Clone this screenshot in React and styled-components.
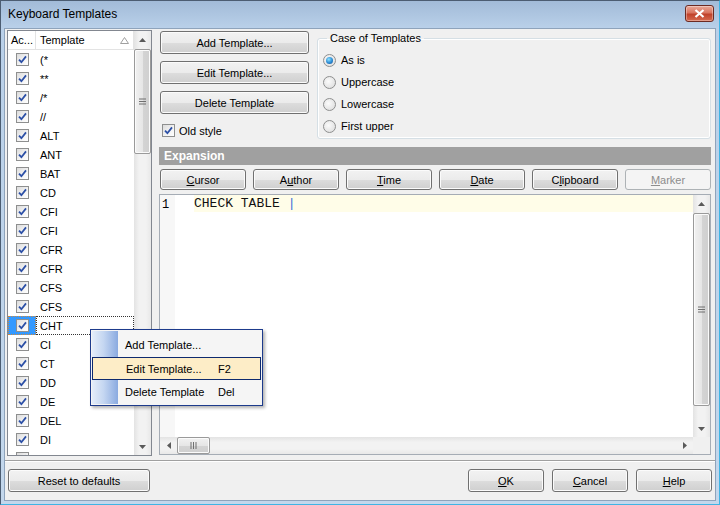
import React from "react";
import styled, { createGlobalStyle, css } from "styled-components";

const GlobalStyle = createGlobalStyle`
  html, body {
    margin: 0;
    padding: 0;
    background: #ffffff;
  }
  body {
    font-family: "Liberation Sans", Arial, sans-serif;
    font-size: 11px;
    color: #000;
  }
  * {
    box-sizing: border-box;
  }
`;

// last row only peeks in at the bottom edge, its name is hidden
const templates = [
  "(*", "**", "/*", "//", "ALT", "ANT", "BAT", "CD", "CFI", "CFI", "CFR",
  "CFR", "CFS", "CFS", "CHT", "CI", "CT", "DD", "DE", "DEL", "DI", ""
];

const cases = ["As is", "Uppercase", "Lowercase", "First upper"];

const macros = [
  { pre: "", key: "C", post: "ursor" },
  { pre: "A", key: "u", post: "thor" },
  { pre: "", key: "T", post: "ime" },
  { pre: "", key: "D", post: "ate" },
  { pre: "C", key: "l", post: "ipboard" },
  { pre: "", key: "M", post: "arker", disabled: true }
];

function Arrow({ dir }) {
  const pts = {
    up: "0,4 3.5,0 7,4",
    down: "0,0 3.5,4 7,0",
    left: "4,0 0,3.5 4,7",
    right: "0,0 4,3.5 0,7"
  }[dir];
  const vertical = dir === "up" || dir === "down";
  return (
    <svg width={vertical ? 7 : 4} height={vertical ? 4 : 7}>
      <polygon points={pts} fill="#5a5a5a" />
    </svg>
  );
}

function Grip({ horizontal }) {
  return horizontal ? (
    <svg width="8" height="7">
      <path d="M1 0v7M3.5 0v7M6 0v7" stroke="#6f6f6f" strokeWidth="1" />
    </svg>
  ) : (
    <svg width="7" height="8">
      <path d="M0 1h7M0 3.5h7M0 6h7" stroke="#6f6f6f" strokeWidth="1" />
    </svg>
  );
}

function Check({ checked = true }) {
  return (
    <CheckBox>
      {checked && (
        <svg width="11" height="11" viewBox="0 0 11 11">
          <path d="M2 5.6 L4.4 8.2 L9 2.4" fill="none" stroke="#2b4fa6" strokeWidth="1.8" />
        </svg>
      )}
    </CheckBox>
  );
}

export default function App() {
  return (
    <>
      <GlobalStyle />
      <Window>
        <TitleBar>
          <Title>Keyboard Templates</Title>
          <CloseButton>
            <svg width="11" height="9" viewBox="0 0 11 9">
              <path d="M1.5 1 L9.5 8 M9.5 1 L1.5 8" stroke="#ffffff" strokeWidth="2.2" />
            </svg>
          </CloseButton>
        </TitleBar>

        <Body>
          <Main>
            <ListPanel>
              <ListInner>
                <ListHeader>
                  <HeadCell $w="28px">Ac...</HeadCell>
                  <HeadCell $grow>
                    Template
                    <SortMark>
                      <svg width="9" height="7">
                        <polygon points="0.5,6.5 4.5,0.5 8.5,6.5" fill="none" stroke="#a0a0a0" />
                      </svg>
                    </SortMark>
                  </HeadCell>
                </ListHeader>
                {templates.map((t, i) => (
                  <Row key={i}>
                    <CheckCell $active={t === "CHT"}>
                      <Check />
                    </CheckCell>
                    <NameCell $focus={t === "CHT"}>{t}</NameCell>
                  </Row>
                ))}
              </ListInner>
              <VScroll>
                <ArrowBox>
                  <Arrow dir="up" />
                </ArrowBox>
                <ThumbV $top="1px" $h="105px">
                  <Grip />
                </ThumbV>
                <Spacer />
                <ArrowBox>
                  <Arrow dir="down" />
                </ArrowBox>
              </VScroll>
            </ListPanel>

            <RightPane>
              <TopArea>
                <ButtonCol>
                  <Button $h="23px">Add Template...</Button>
                  <Button $h="23px">Edit Template...</Button>
                  <Button $h="23px">Delete Template</Button>
                  <CheckRow>
                    <Check />
                    <span>Old style</span>
                  </CheckRow>
                </ButtonCol>
                <GroupBox>
                  <Legend>Case of Templates</Legend>
                  {cases.map((c, i) => (
                    <RadioRow key={c}>
                      <Radio $on={i === 0} />
                      <span>{c}</span>
                    </RadioRow>
                  ))}
                </GroupBox>
              </TopArea>

              <SectionBar>Expansion</SectionBar>

              <MacroRow>
                {macros.map((m) => (
                  <Button key={m.post} $w="86px" $h="21px" disabled={m.disabled}>
                    {m.pre}
                    <u>{m.key}</u>
                    {m.post}
                  </Button>
                ))}
              </MacroRow>

              <Editor>
                <EditArea>
                  <Gutter>1</Gutter>
                  <Lines>
                    <CurrentLine>
                      CHECK TABLE <Caret>|</Caret>
                    </CurrentLine>
                  </Lines>
                </EditArea>
                <VScroll $editor>
                  <ArrowBox>
                    <Arrow dir="up" />
                  </ArrowBox>
                  <ThumbV $top="1px" $h="193px">
                    <Grip />
                  </ThumbV>
                  <Spacer />
                  <ArrowBox>
                    <Arrow dir="down" />
                  </ArrowBox>
                </VScroll>
                <HScroll>
                  <ArrowBox>
                    <Arrow dir="left" />
                  </ArrowBox>
                  <ThumbH>
                    <Grip horizontal />
                  </ThumbH>
                  <Spacer />
                  <ArrowBox>
                    <Arrow dir="right" />
                  </ArrowBox>
                </HScroll>
                <Corner />
              </Editor>
            </RightPane>
          </Main>

          <Separator />

          <Footer>
            <Button $w="142px" $h="23px">Reset to defaults</Button>
            <FooterRight>
              <Button $w="76px" $h="23px">
                <u>O</u>K
              </Button>
              <Button $w="76px" $h="23px">
                <u>C</u>ancel
              </Button>
              <Button $w="76px" $h="23px">
                <u>H</u>elp
              </Button>
            </FooterRight>
          </Footer>
        </Body>

        <Menu>
          <MenuStrip />
          <MenuItems>
            <MenuItem>
              <span>Add Template...</span>
            </MenuItem>
            <MenuItem $hot>
              <span>Edit Template...</span>
              <Shortcut>F2</Shortcut>
            </MenuItem>
            <MenuItem>
              <span>Delete Template</span>
              <Shortcut>Del</Shortcut>
            </MenuItem>
          </MenuItems>
        </Menu>
      </Window>
    </>
  );
}

const Window = styled.div`
  position: relative;
  width: 720px;
  height: 505px;
  display: flex;
  flex-direction: column;
  border: 1px solid #4c5d72;
  border-right-color: #3fb4e4;
  border-bottom-color: #3fb4e4;
  background: linear-gradient(#a2bbd8 0px, #b9d0e9 27px, #c3d7ec 100%);
`;

const TitleBar = styled.div`
  height: 27px;
  display: flex;
  justify-content: space-between;
  align-items: flex-start;
  padding: 0 5px 0 7px;
`;

const Title = styled.div`
  font-size: 12px;
  line-height: 14px;
  margin-top: 6px;
  color: #000;
`;

const CloseButton = styled.div`
  width: 29px;
  height: 17px;
  margin-top: 4px;
  border: 1px solid #6c2a22;
  border-radius: 3px;
  display: flex;
  align-items: center;
  justify-content: center;
  background: linear-gradient(#e9a999 0%, #d9745f 45%, #c0412a 55%, #d66a4f 100%);
  box-shadow: inset 0 0 0 1px rgba(255, 255, 255, 0.35);
`;

const Body = styled.div`
  flex: 1;
  margin: 0 3px 3px 3px;
  background: #f0f0f0;
  border: 1px solid #8ea3bb;
  display: flex;
  flex-direction: column;
`;

const Main = styled.div`
  display: flex;
  gap: 7px;
  padding: 1px 4px 0 2px;
  height: 427px;
`;

const ListPanel = styled.div`
  width: 145px;
  height: 426px;
  border: 1px solid #828790;
  background: #fff;
  display: flex;
  overflow: hidden;
`;

const ListInner = styled.div`
  flex: 1;
  overflow: hidden;
`;

const ListHeader = styled.div`
  display: flex;
  height: 19px;
  border-bottom: 1px solid #e3e3e3;
`;

const HeadCell = styled.div`
  position: relative;
  display: flex;
  align-items: center;
  padding-left: ${(p) => (p.$grow ? "4px" : "3px")};
  ${(p) => (p.$grow ? "flex: 1;" : `width: ${p.$w};`)}
  border-right: 1px solid #e3e3e3;
  font-size: 11px;
`;

const SortMark = styled.span`
  position: absolute;
  right: 4px;
  top: 6px;
  display: flex;
`;

const Row = styled.div`
  display: flex;
  height: 19px;
`;

const CheckCell = styled.div`
  width: 28px;
  display: flex;
  align-items: center;
  justify-content: center;
  ${(p) =>
    p.$active &&
    css`
      background: #3399ff;
      outline: 1px dotted #d08a3c;
      outline-offset: -1px;
    `}
`;

const NameCell = styled.div`
  flex: 1;
  display: flex;
  align-items: center;
  padding-left: 4px;
  ${(p) =>
    p.$focus &&
    css`
      outline: 1px dotted #333;
      outline-offset: -1px;
    `}
`;

const CheckBox = styled.span`
  width: 13px;
  height: 13px;
  border: 1px solid #8e8f8f;
  background: linear-gradient(135deg, #dcdcdc 0%, #f4f4f4 60%, #ffffff 100%);
  display: inline-flex;
  align-items: center;
  justify-content: center;
  flex: none;
`;

const VScroll = styled.div`
  width: 17px;
  display: flex;
  flex-direction: column;
  background: linear-gradient(to right, #e3e3e3, #f2f2f2 30%, #f2f2f2 70%, #e8e8e8);
  ${(p) =>
    p.$editor &&
    css`
      grid-row: 1;
      grid-column: 2;
    `}
`;

const HScroll = styled.div`
  grid-row: 2;
  grid-column: 1;
  height: 17px;
  display: flex;
  background: linear-gradient(#e3e3e3, #f2f2f2 30%, #f2f2f2 70%, #e8e8e8);
`;

const Corner = styled.div`
  grid-row: 2;
  grid-column: 2;
  background: #f0f0f0;
`;

const ArrowBox = styled.div`
  width: 17px;
  height: 17px;
  flex: none;
  display: flex;
  align-items: center;
  justify-content: center;
`;

const ThumbV = styled.div`
  margin: ${(p) => p.$top} 0 0 0;
  height: ${(p) => p.$h};
  width: 17px;
  border: 1px solid #9a9a9a;
  border-radius: 2px;
  background: linear-gradient(to right, #f1f1f1, #e6e6e6 50%, #d4d4d4 51%, #cfcfcf);
  box-shadow: inset 0 0 0 1px #fbfbfb;
  display: flex;
  align-items: center;
  justify-content: center;
`;

const ThumbH = styled.div`
  width: 33px;
  height: 17px;
  border: 1px solid #9a9a9a;
  border-radius: 2px;
  background: linear-gradient(#f1f1f1, #e6e6e6 50%, #d4d4d4 51%, #cfcfcf);
  box-shadow: inset 0 0 0 1px #fbfbfb;
  display: flex;
  align-items: center;
  justify-content: center;
`;

const Spacer = styled.div`
  flex: 1;
`;

const RightPane = styled.div`
  flex: 1;
  display: flex;
  flex-direction: column;
`;

const TopArea = styled.div`
  height: 117px;
  display: flex;
  gap: 8px;
`;

const ButtonCol = styled.div`
  width: 150px;
  padding: 1px 0 0 1px;
  display: flex;
  flex-direction: column;
  gap: 7px;
`;

const Button = styled.button`
  width: ${(p) => p.$w || "auto"};
  height: ${(p) => p.$h || "22px"};
  flex: none;
  padding: 0;
  font-family: "Liberation Sans", Arial, sans-serif;
  font-size: 11px;
  color: #000;
  border: 1px solid #707070;
  border-radius: 3px;
  background: linear-gradient(#f2f2f2 0%, #ebebeb 50%, #dddddd 51%, #cfcfcf 100%);
  box-shadow: inset 0 0 0 1px #fbfbfb;
  &:disabled {
    color: #8d8d8d;
    border-color: #adb2b5;
    background: #f4f4f4;
    box-shadow: none;
  }
`;

const CheckRow = styled.label`
  margin-top: 3px;
  margin-left: 2px;
  display: flex;
  align-items: center;
  gap: 4px;
  height: 13px;
`;

const GroupBox = styled.fieldset`
  flex: 1;
  margin: 1px 0 0 0;
  height: 108px;
  padding: 4px 0 0 5px;
  border: 1px solid #d5dfe5;
  border-radius: 3px;
  box-shadow: inset 0 0 0 1px #ffffff;
`;

const Legend = styled.legend`
  padding: 0 3px;
  margin-left: 4px;
  font-size: 11px;
  line-height: 14px;
`;

const RadioRow = styled.label`
  display: flex;
  align-items: center;
  gap: 5px;
  height: 22px;
`;

const Radio = styled.span`
  width: 13px;
  height: 13px;
  border-radius: 50%;
  border: 1px solid #8e8f8f;
  background: radial-gradient(circle at 40% 40%, #fbfbfb, #d9d9d9);
  display: inline-flex;
  align-items: center;
  justify-content: center;
  &::after {
    content: "";
    width: 7px;
    height: 7px;
    border-radius: 50%;
    display: ${(p) => (p.$on ? "block" : "none")};
    background: radial-gradient(circle at 40% 35%, #8ee3ff, #2a8ad4 55%, #124b8a);
  }
`;

const SectionBar = styled.div`
  height: 18px;
  background: #a0a0a0;
  color: #fff;
  font-weight: bold;
  font-size: 12px;
  line-height: 18px;
  padding-left: 5px;
`;

const MacroRow = styled.div`
  display: flex;
  gap: 7px;
  margin-top: 4px;
  padding-left: 1px;
`;

const Editor = styled.div`
  flex: 1;
  margin-top: 4px;
  margin-bottom: 1px;
  border: 1px solid #a5acb5;
  background: #fff;
  display: grid;
  grid-template-columns: 1fr 17px;
  grid-template-rows: 1fr 17px;
  overflow: hidden;
`;

const EditArea = styled.div`
  grid-row: 1;
  grid-column: 1;
  display: flex;
`;

const Gutter = styled.div`
  width: 15px;
  background: #f7f7f7;
  padding: 3px 0 0 2px;
  font-family: "Liberation Mono", "Courier New", monospace;
  font-size: 12px;
  line-height: 14px;
`;

const Lines = styled.div`
  flex: 1;
  padding: 0 0 0 19px;
`;

const CurrentLine = styled.div`
  height: 17px;
  background: #fffde8;
  font-family: "Liberation Mono", "Courier New", monospace;
  font-size: 13px;
  line-height: 17px;
  white-space: pre;
  color: #111;
`;

const Caret = styled.span`
  color: #3a6fd8;
`;

const Separator = styled.div`
  margin-top: 4px;
  height: 2px;
  border-top: 1px solid #a0a0a0;
  border-bottom: 1px solid #ffffff;
`;

const Footer = styled.div`
  flex: 1;
  display: flex;
  justify-content: space-between;
  padding: 7px 3px 0 3px;
`;

const FooterRight = styled.div`
  display: flex;
  gap: 8px;
`;

const Menu = styled.div`
  position: absolute;
  left: 89px;
  top: 328px;
  width: 173px;
  height: 77px;
  display: flex;
  background: #f5f5f5;
  border: 1px solid #1d3b8c;
  box-shadow: 2px 2px 3px rgba(0, 0, 0, 0.3);
  padding: 1px;
`;

const MenuStrip = styled.div`
  width: 26px;
  background: linear-gradient(to right, #e4edf9 0%, #c4d6f1 45%, #8aaae0 100%);
`;

const MenuItems = styled.div`
  position: relative;
  flex: 1;
  display: flex;
  flex-direction: column;
  padding-top: 2px;
`;

const MenuItem = styled.div`
  height: 24px;
  display: flex;
  align-items: center;
  padding-left: 7px;
  font-size: 11px;
  ${(p) =>
    p.$hot &&
    css`
      margin-left: -26px;
      padding-left: 33px;
      background: #fdedc7;
      border: 1px solid #0e2a6e;
      height: 23px;
    `}
`;

const Shortcut = styled.span`
  position: absolute;
  left: 100px;
`;
